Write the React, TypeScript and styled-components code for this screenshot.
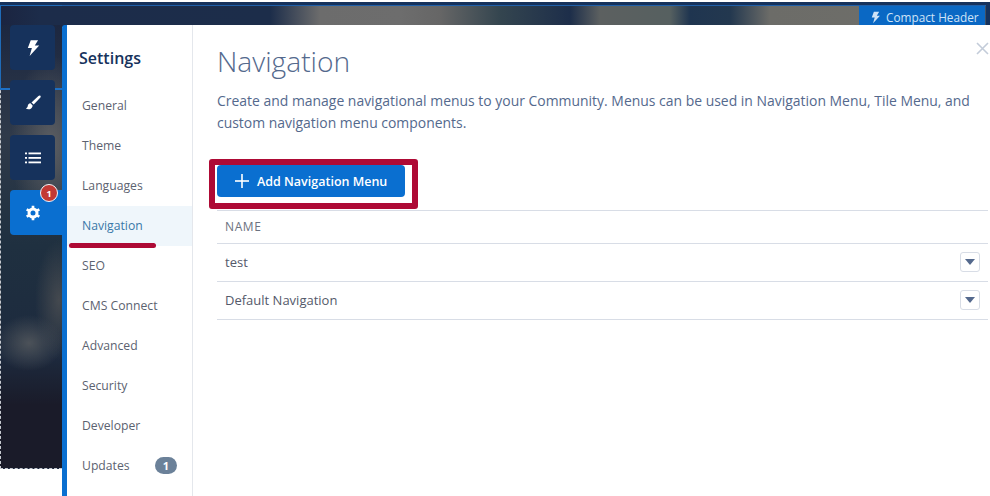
import * as React from 'react';
import styled, { createGlobalStyle } from 'styled-components';

const GlobalStyle = createGlobalStyle`
  html, body {
    margin: 0;
    padding: 0;
    background: #fff;
  }
  * {
    box-sizing: border-box;
  }
`;

const Page = styled.div`
  position: relative;
  width: 990px;
  height: 496px;
  overflow: hidden;
  background: #fff;
  font-family: 'Open Sans', sans-serif;
`;

const TopBar = styled.div`
  height: 25px;
  margin-top: 2px;
  margin-bottom: -2px;
  border-top: 3px solid #16325c;
  display: flex;
  justify-content: flex-end;
  background:
    linear-gradient(90deg,
      #1b2440 0,
      #1c2c4a 40px,
      #1c2d4a 270px,
      #6c6c6c 320px,
      #6d6d6d 400px,
      #666 440px,
      #34454f 500px,
      #1d2e4a 570px,
      #5c6060 600px,
      #566060 670px,
      #1f3550 690px,
      #23384f 730px,
      #6c6c68 770px,
      #6f6f6a 985px,
      #16325c 986px);
`;

const HeaderTab = styled.div`
  display: flex;
  align-items: center;
  gap: 4px;
  width: 126px;
  height: 20px;
  margin-top: 1px;
  margin-right: 5px;
  padding: 2px 0 0 10px;
  background: #0a68c4;
  color: #cfe3f7;
  font-size: 11.800px;
  white-space: nowrap;
`;

const Body = styled.div`
  display: flex;
  height: 471px;
`;

const Rail = styled.div`
  flex: none;
  width: 62px;
  height: 444px;
  padding-left: 9px;
  display: flex;
  flex-direction: column;
  gap: 10px;
  border-left: 1px dashed #c8ccd2;
  border-bottom: 1px dashed #c8ccd2;
  background:
    radial-gradient(ellipse 34px 28px at 28px 318px, #4c5259 0, rgba(76, 82, 89, 0) 100%),
    radial-gradient(ellipse 24px 60px at 58px 275px, #44494f 0, rgba(68, 73, 79, 0) 100%),
    radial-gradient(ellipse 40px 90px at 50px 120px, #5c5e62 0, rgba(92, 94, 98, 0) 100%),
    linear-gradient(180deg, #1c2740 0, #2f3a4a 110px, #1f3040 220px, #1d2a3e 330px, #1a1b29 380px, #1a1b29 100%);
`;

const RailButton = styled.div<{ $active?: boolean }>`
  position: relative;
  display: flex;
  align-items: center;
  justify-content: center;
  width: ${p => (p.$active ? '52px' : '45px')};
  height: 45px;
  padding-right: ${p => (p.$active ? '7px' : '0')};
  border-radius: ${p => (p.$active ? '4px 0 0 4px' : '4px')};
  background: ${p => (p.$active ? '#0a6fd0' : '#16325c')};
  color: #fff;
`;

const RailBadge = styled.span`
  position: absolute;
  top: -6px;
  left: 30px;
  display: flex;
  align-items: center;
  justify-content: center;
  width: 18px;
  height: 18px;
  border: 1px solid #f4f6f9;
  border-radius: 50%;
  background: #c23934;
  color: #fff;
  font-size: 9px;
  font-weight: 700;
`;

const Panel = styled.div`
  flex: 1;
  display: flex;
  border-left: 5px solid #0a6fd0;
  border-top-left-radius: 3px;
  background: #fff;
`;

const Sidebar = styled.nav`
  flex: none;
  width: 126px;
  border-right: 1px solid #e4e7ec;
`;

const SidebarTitle = styled.h2`
  margin: 0;
  padding: 22px 0 0 12px;
  height: 61px;
  color: #16325c;
  font-size: 16px;
  line-height: 22px;
  font-weight: 600;
`;

const NavItem = styled.div<{ $active?: boolean }>`
  display: flex;
  align-items: center;
  justify-content: space-between;
  height: 40px;
  padding: 0 15px 2px;
  background: ${p => (p.$active ? '#eff6fb' : 'transparent')};
  color: ${p => (p.$active ? '#3a78a8' : '#5c6270')};
  font-size: 12.200px;
`;

const NavCount = styled.span`
  display: flex;
  align-items: center;
  justify-content: center;
  width: 22px;
  height: 17px;
  border-radius: 9px;
  background: #6b8199;
  color: #fff;
  font-size: 11px;
  font-weight: 700;
`;

const Main = styled.main`
  position: relative;
  flex: 1;
  padding: 16px 2px 0 24px;
`;

const Title = styled.h1`
  margin: 0;
  color: #54698d;
  font-size: 28.200px;
  line-height: 40px;
  font-weight: 300;
`;

const Description = styled.p`
  margin: 9px 0 0;
  width: 760px;
  color: #54698d;
  font-size: 13.950px;
  line-height: 22px;
`;

const AddButton = styled.button`
  display: flex;
  align-items: center;
  gap: 7px;
  width: 188px;
  height: 32px;
  margin-top: 31px;
  padding: 0 0 0 17px;
  border: 0;
  border-radius: 4px;
  background: #0a6fd0;
  color: #fff;
  font-family: inherit;
  font-size: 12.500px;
  font-weight: 600;
`;

const Table = styled.div`
  margin-top: 13px;
  border-top: 1px solid #d8dde6;
`;

const Row = styled.div<{ $head?: boolean }>`
  display: flex;
  align-items: center;
  justify-content: space-between;
  height: ${p => (p.$head ? '33px' : '38px')};
  padding: 0 8px 2px;
  border-bottom: 1px solid #d8dde6;
  color: ${p => (p.$head ? '#6b7280' : '#54596a')};
  font-size: ${p => (p.$head ? '12px' : '13px')};
  letter-spacing: ${p => (p.$head ? '0.6px' : '0')};
`;

const RowMenu = styled.span`
  display: flex;
  align-items: center;
  justify-content: center;
  width: 20px;
  height: 20px;
  border: 1px solid #d8dde6;
  border-radius: 3px;
  background: #fff;
`;

const CloseButton = styled.svg`
  position: absolute;
  top: 17px;
  right: 1px;
`;

const Highlight = styled.div`
  position: absolute;
  left: 209px;
  top: 159px;
  width: 209px;
  height: 50px;
  border: 6px solid #ae0a35;
  border-radius: 3px;
`;

const Underline = styled.div`
  position: absolute;
  left: 69px;
  top: 243px;
  width: 87px;
  height: 5px;
  border-radius: 3px;
  background: #ae0a35;
`;

const SelectionLine = styled.div`
  position: absolute;
  left: 0;
  top: 5px;
  width: 62px;
  height: 85px;
  border-top: 1px solid #1f6bb8;
  border-left: 1px solid #1f6bb8;
  border-bottom: 2px solid #1e70c4;
`;

const TopLine = styled.div`
  position: absolute;
  left: 0;
  right: 4px;
  top: 5px;
  height: 1px;
  background: #1f5fa8;
`;

const Bolt = ({ size = 18 }: { size?: number }) => (
  <svg width={size} height={size} viewBox="0 0 16 16" fill="currentColor">
    <path d="M6 1h6.500L9.600 5.800H13.500L5 15l2-7H3.400z" />
  </svg>
);

const Brush = () => (
  <svg width="16" height="16" viewBox="0 0 16 16" fill="currentColor">
    <path d="M15.400.7c-.5-.5-1.300-.4-2 .2L6.500 7.400l2.200 2.200 6.500-6.800c.6-.7.7-1.500.2-2.100z" />
    <path d="M5.500 8.300C3.600 8.400 3 9.800 2.700 11.200c-.2 1-.8 1.700-1.900 2 1.300 1.400 3.800 1.400 5.300.2 1-.8 1.500-1.900 1.500-3z" />
  </svg>
);

const ListIcon = () => (
  <svg width="16" height="12" viewBox="0 0 16 12" fill="currentColor">
    <rect x="0" y="0.500" width="2" height="1.800" />
    <rect x="3.500" y="0.500" width="12.500" height="1.800" />
    <rect x="0" y="5" width="2" height="1.800" />
    <rect x="3.500" y="5" width="12.500" height="1.800" />
    <rect x="0" y="9.500" width="2" height="1.800" />
    <rect x="3.500" y="9.500" width="12.500" height="1.800" />
  </svg>
);

const Gear = () => (
  <svg width="16" height="16" viewBox="0 0 24 24" fill="none" stroke="currentColor" strokeWidth="4.500">
    <circle cx="12" cy="12" r="6" />
    <path strokeWidth="4" d="M12 1v4M12 19v4M2.500 6.500l3.500 2M18 15.500l3.500 2M2.500 17.500l3.500-2M18 8.500l3.500-2" />
  </svg>
);

const Caret = () => (
  <svg width="10" height="6" viewBox="0 0 10 6" fill="#54698d">
    <path d="M0 0h10L5 6z" />
  </svg>
);

const navItems = ['General', 'Theme', 'Languages', 'Navigation', 'SEO', 'CMS Connect', 'Advanced', 'Security', 'Developer', 'Updates'];

const App = () => {
  return (
    <Page>
      <GlobalStyle />
      <TopBar>
        <HeaderTab><Bolt size={13} />Compact Header</HeaderTab>
      </TopBar>
      <TopLine />
      <SelectionLine />
      <Body>
        <Rail>
          <RailButton><Bolt /></RailButton>
          <RailButton><Brush /></RailButton>
          <RailButton><ListIcon /></RailButton>
          <RailButton $active>
            <Gear />
            <RailBadge>1</RailBadge>
          </RailButton>
        </Rail>
        <Panel>
          <Sidebar>
            <SidebarTitle>Settings</SidebarTitle>
            {navItems.map(item => (
              <NavItem key={item} $active={item === 'Navigation'}>
                {item}
                {item === 'Updates' && <NavCount>1</NavCount>}
              </NavItem>
            ))}
          </Sidebar>
          <Main>
            <Title>Navigation</Title>
            <Description>
              Create and manage navigational menus to your Community. Menus can be used in Navigation Menu, Tile Menu, and custom navigation menu components.
            </Description>
            <AddButton>
              <svg width="16" height="16" viewBox="0 0 16 16" fill="#fff">
                <rect x="7.200" y="1" width="1.600" height="14" />
                <rect x="1" y="7.200" width="14" height="1.600" />
              </svg>
              Add Navigation Menu
            </AddButton>
            <Table>
              <Row $head>NAME</Row>
              <Row>test<RowMenu><Caret /></RowMenu></Row>
              <Row>Default Navigation<RowMenu><Caret /></RowMenu></Row>
            </Table>
            <CloseButton width="13" height="13" viewBox="0 0 13 13" stroke="#c3ccd9" strokeWidth="1.600">
              <path d="M1 1l11 11M12 1L1 12" />
            </CloseButton>
          </Main>
        </Panel>
      </Body>
      <Highlight />
      <Underline />
    </Page>
  );
};

export default App;
